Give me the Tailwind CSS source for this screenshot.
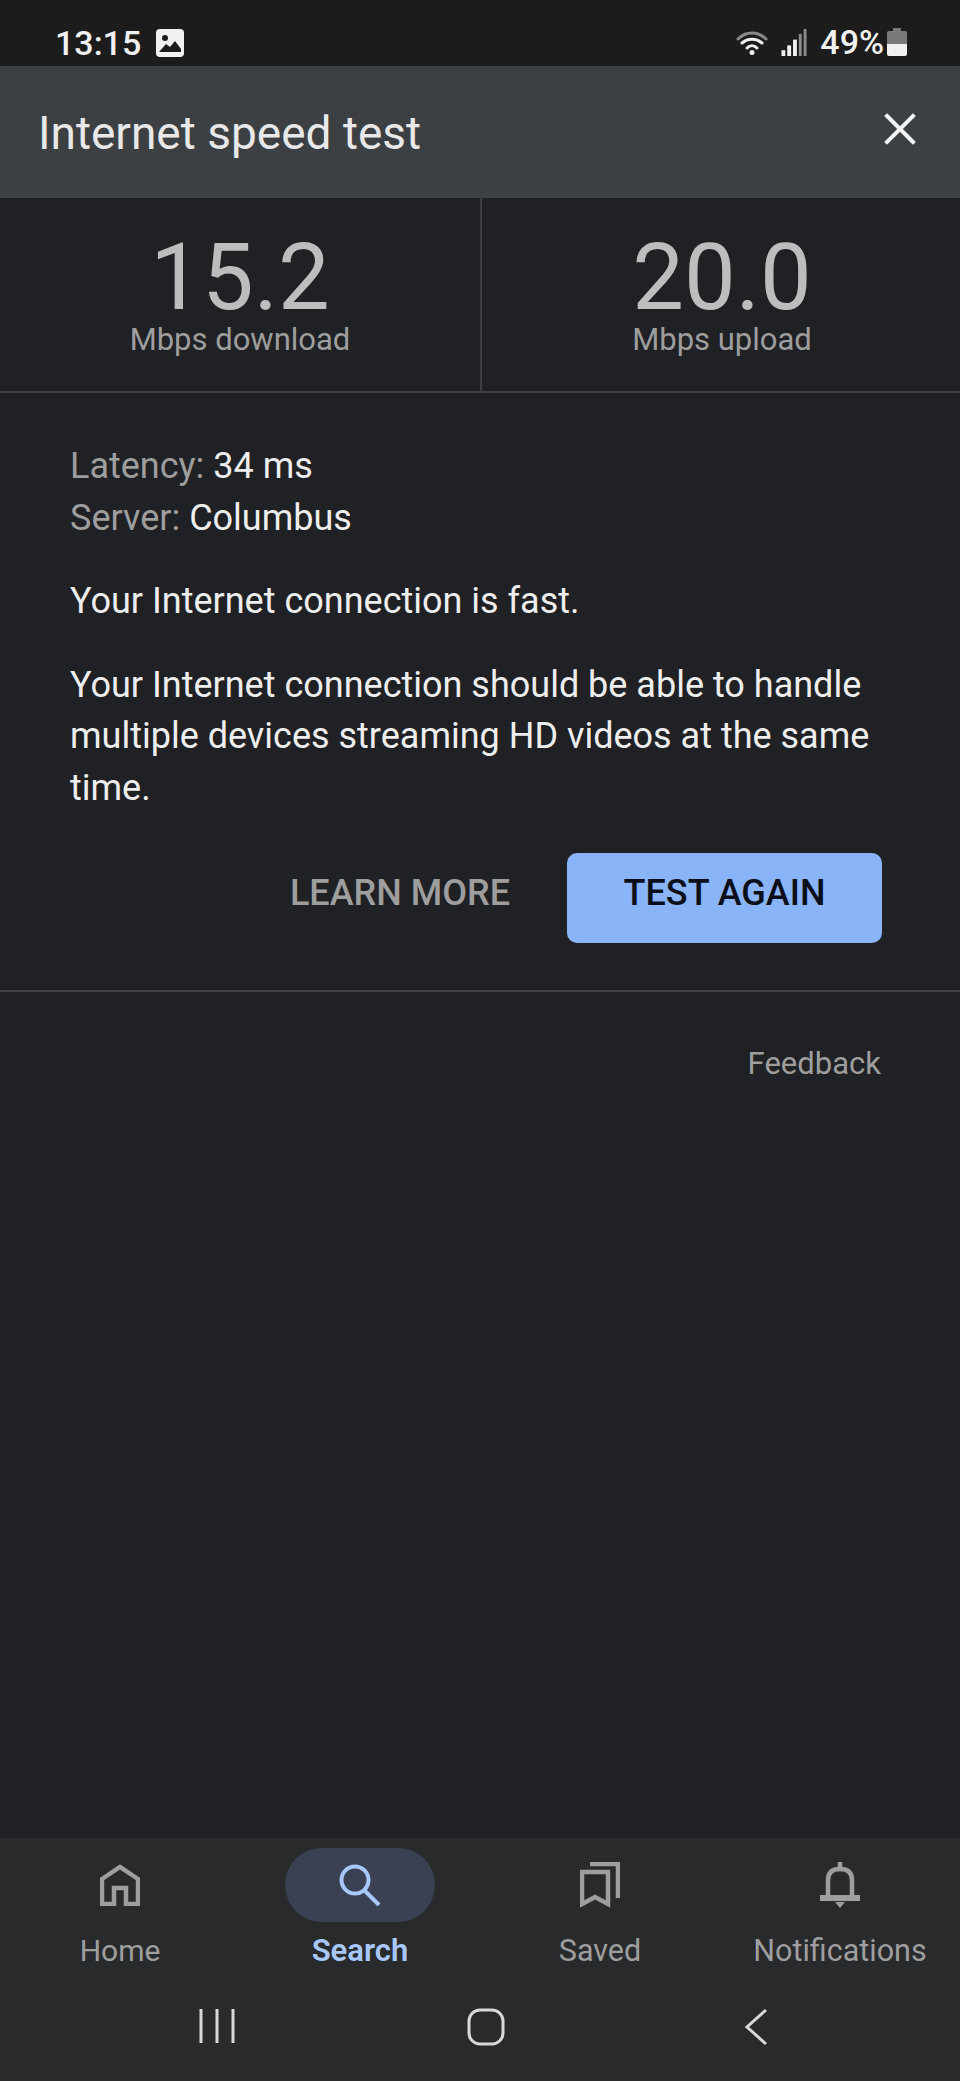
<!DOCTYPE html>
<html lang="en">

<head>
  <meta charset="UTF-8" />
  <meta name="viewport" content="width=device-width, initial-scale=1.0" />
  <title>Internet speed test</title>
  <script src="https://cdn.jsdelivr.net/npm/@tailwindcss/browser@4"></script>
</head>

<body class="bg-[#202124] font-['Roboto',sans-serif]">
  <div class="flex flex-col w-[960px] h-[2081px] overflow-hidden">
    <!-- Status bar -->
    <div class="h-[66px] bg-[#1c1c1c] flex items-start justify-between pt-[23px] pl-[55px] pr-[53px] text-[#f1f1f1] shrink-0">
      <div class="flex items-center gap-[15px] h-[40px]">
        <span class="text-[34px] leading-[40px] font-medium">13:15</span>
        <svg width="28" height="28" viewBox="0 0 28 28">
          <rect width="28" height="28" rx="4" fill="#f1f1f1" />
          <circle cx="9" cy="9" r="3" fill="#1c1c1c" />
          <path d="M3 23 L10 15 L14 18 L19 12 L25 20 V23 Z" fill="#1c1c1c" />
        </svg>
      </div>
      <div class="flex items-center h-[40px] mt-[-1px]">
        <svg width="32" height="25" viewBox="0 0 32 25" fill="none" stroke-linecap="round">
          <path d="M2 9 C10 1 22 1 30 9" stroke="#8a8a8a" stroke-width="3" />
          <path d="M6 13 C12 8 20 8 26 13" stroke="#f1f1f1" stroke-width="3" />
          <path d="M11 18 C14 15 18 15 21 18" stroke="#f1f1f1" stroke-width="3" />
          <circle cx="16" cy="22.5" r="2.5" fill="#f1f1f1" />
        </svg>
        <svg class="ml-[13px]" width="26" height="27" viewBox="0 0 26 28">
          <rect x="0" y="22" width="4" height="6" fill="#f1f1f1" />
          <rect x="6" y="17" width="4" height="11" fill="#f1f1f1" />
          <rect x="12" y="11" width="4" height="17" fill="#f1f1f1" />
          <rect x="18" y="5" width="3" height="23" fill="#8a8a8a" />
          <rect x="23" y="0" width="3" height="28" fill="#8a8a8a" />
        </svg>
        <span class="ml-[13px] text-[34px] leading-[40px] font-medium">49%</span>
        <svg class="ml-[3px]" width="20" height="28" viewBox="0 0 20 28">
          <path d="M6 0 H14 V3 H18 Q20 3 20 5 V16 H0 V5 Q0 3 2 3 H6 Z" fill="#7a7a7a" />
          <path d="M0 16 H20 V26 Q20 28 18 28 H2 Q0 28 0 26 Z" fill="#f1f1f1" />
        </svg>
      </div>
    </div>

    <!-- Header -->
    <div class="h-[132px] bg-[#3c4043] flex items-center justify-between pl-[38px] pr-[44px] shrink-0">
      <h1 class="text-[46px] text-[#e8e8e8] pt-[2px]">Internet speed test</h1>
      <svg class="mb-[6px]" width="32" height="32" viewBox="0 0 32 32" stroke="#f1f3f4" stroke-width="4" stroke-linecap="square">
        <path d="M3 3 L29 29 M29 3 L3 29" />
      </svg>
    </div>

    <!-- Results -->
    <div class="h-[195px] grid grid-cols-[482px_1fr] border-b-2 border-[#3c4043] shrink-0">
      <div class="flex flex-col items-center border-r-2 border-[#3c4043] pt-[37px]">
        <span class="text-[92px] leading-[86px] text-[#bdbdbd]">15.2</span>
        <span class="text-[31px] leading-[38px] text-[#9e9e9e]">Mbps download</span>
      </div>
      <div class="flex flex-col items-center pt-[37px] pl-[2px]">
        <span class="text-[92px] leading-[86px] text-[#bdbdbd]">20.0</span>
        <span class="text-[31px] leading-[38px] text-[#9e9e9e]">Mbps upload</span>
      </div>
    </div>

    <!-- Details -->
    <div class="h-[599px] border-b-2 border-[#3c4043] pt-[48px] px-[70px] shrink-0 text-[36px] leading-[51.6px] text-[#eeeeee]">
      <p><span class="text-[#9e9e9e]">Latency:</span> 34 ms</p>
      <p><span class="text-[#9e9e9e]">Server:</span> Columbus</p>
      <p class="mt-[32px]">Your Internet connection is fast.</p>
      <p class="mt-[32px]">Your Internet connection should be able to handle multiple devices streaming HD videos at the same time.</p>
      <div class="flex items-center justify-end mt-[38px] pr-[8px]">
        <a href="#" class="text-[36px] font-medium text-[#9e9e9e] mr-[57px] mb-[8px]">LEARN MORE</a>
        <button class="w-[315px] h-[90px] pb-[8px] rounded-[10px] bg-[#8ab4f8] text-[36px] font-medium text-[#0b0f19]">TEST AGAIN</button>
      </div>
    </div>

    <!-- Feedback -->
    <div class="flex-1 pt-[49px] pr-[79px] text-right">
      <a href="#" class="text-[31px] text-[#9e9e9e]">Feedback</a>
    </div>

    <!-- Bottom nav -->
    <div class="h-[243px] bg-[#292a2c] shrink-0 flex flex-col">
      <div class="grid grid-cols-4 pt-[10px]">
        <div class="flex flex-col items-center">
          <div class="w-[150px] h-[74px] flex items-center justify-center">
            <svg width="40" height="42" viewBox="0 0 40 42" fill="none" stroke="#9e9e9e" stroke-width="4.5">
              <path d="M2 40 V15 L20 3 L38 15 V40 H26 V24 H14 V40 Z" />
            </svg>
          </div>
          <span class="text-[30px] mt-[6px] leading-[46px] text-[#9e9e9e]">Home</span>
        </div>
        <div class="flex flex-col items-center">
          <div class="w-[150px] h-[74px] rounded-full bg-[#394152] flex items-center justify-center">
            <svg width="42" height="42" viewBox="0 0 42 42" fill="none" stroke="#a8c7fa" stroke-width="4">
              <circle cx="16" cy="16" r="13.5" />
              <path d="M25 26 L40 41" />
            </svg>
          </div>
          <span class="text-[31px] mt-[6px] leading-[46px] font-semibold text-[#a8c7fa]">Search</span>
        </div>
        <div class="flex flex-col items-center">
          <div class="w-[150px] h-[74px] flex items-center justify-center">
            <svg width="40" height="46" viewBox="0 0 40 46" fill="none" stroke="#9e9e9e" stroke-width="4.5">
              <path d="M2 10 H28 V42 L15 35 L2 42 Z" />
              <path d="M10 2 H38 V36" />
            </svg>
          </div>
          <span class="text-[30.5px] mt-[6px] leading-[46px] text-[#9e9e9e]">Saved</span>
        </div>
        <div class="flex flex-col items-center">
          <div class="w-[150px] h-[74px] flex items-center justify-center">
            <svg width="40" height="46" viewBox="0 0 40 46" fill="none" stroke="#9e9e9e" stroke-width="4.5">
              <path d="M8 35 V18 C8 10 13 7 20 7 C27 7 32 10 32 18 V35" />
              <path d="M0 36 H40" stroke-width="6" />
              <path d="M20 0 V7" />
              <path d="M15 40 H25 L20 46 Z" fill="#9e9e9e" stroke="none" />
            </svg>
          </div>
          <span class="text-[30.5px] mt-[6px] leading-[46px] text-[#9e9e9e]">Notifications</span>
        </div>
      </div>
      <!-- Android buttons -->
      <div class="flex items-start pt-[34px] pl-[199px]">
        <svg width="36" height="36" viewBox="0 0 36 36" stroke="#d8d8d8" stroke-width="3">
          <path d="M2 1 V35 M18 1 V35 M34 1 V35" />
        </svg>
        <svg class="ml-[232px]" width="38" height="38" viewBox="0 0 38 38" fill="none" stroke="#d8d8d8" stroke-width="3">
          <rect x="2" y="2" width="34" height="34" rx="11" />
        </svg>
        <svg class="ml-[239px]" width="24" height="38" viewBox="0 0 24 38" fill="none" stroke="#d8d8d8" stroke-width="3">
          <path d="M22 2 L3 19 L22 36" />
        </svg>
      </div>
    </div>
  </div>
</body>

</html>
